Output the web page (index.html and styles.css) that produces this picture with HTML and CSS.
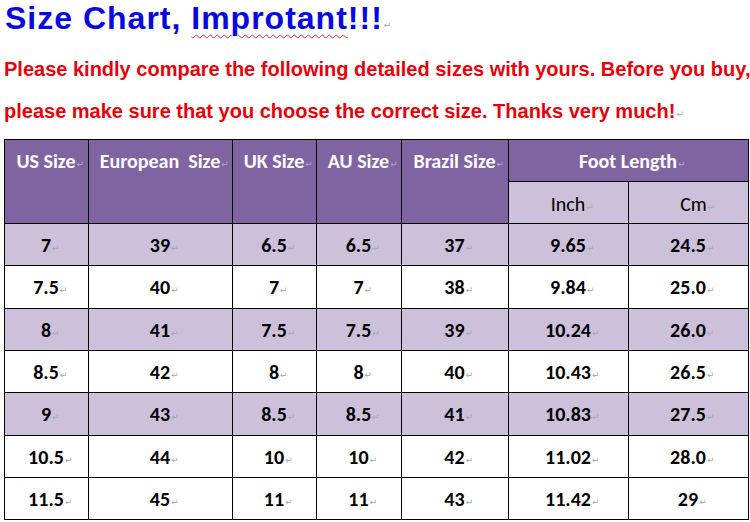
FILE: index.html
```html
<!DOCTYPE html>
<html>
<head>
<meta charset="utf-8">
<link rel="stylesheet" href="styles.css">
</head>
<body>
<h1 class="title"><span>Size Chart, </span><span class="typo">Improtant</span><span>!!!</span><span class="pm">↵</span></h1>
<div class="note">
  <div class="line first">Please kindly compare the following detailed sizes with yours. Before you buy,</div>
  <div class="line">please make sure that you choose the correct size. Thanks very much!<span class="pm">↵</span></div>
</div>
<div class="chart">
  <div class="cell head tall">US Size<span class="pm">↵</span></div>
  <div class="cell head tall">European&nbsp; Size<span class="pm">↵</span></div>
  <div class="cell head tall">UK Size<span class="pm">↵</span></div>
  <div class="cell head tall">AU Size<span class="pm">↵</span></div>
  <div class="cell head tall">Brazil Size<span class="pm">↵</span></div>
  <div class="cell head wide">Foot Length<span class="pm">↵</span></div>
  <div class="cell sub">Inch<span class="pm">↵</span></div>
  <div class="cell sub cm">Cm<span class="pm">↵</span></div>

  <div class="cell lt">7<span class="pm">↵</span></div><div class="cell lt">39<span class="pm">↵</span></div><div class="cell lt">6.5<span class="pm">↵</span></div><div class="cell lt">6.5<span class="pm">↵</span></div><div class="cell lt">37<span class="pm">↵</span></div><div class="cell lt">9.65<span class="pm">↵</span></div><div class="cell lt">24.5<span class="pm">↵</span></div>

  <div class="cell">7.5<span class="pm">↵</span></div><div class="cell">40<span class="pm">↵</span></div><div class="cell">7<span class="pm">↵</span></div><div class="cell">7<span class="pm">↵</span></div><div class="cell">38<span class="pm">↵</span></div><div class="cell">9.84<span class="pm">↵</span></div><div class="cell">25.0<span class="pm">↵</span></div>

  <div class="cell lt">8<span class="pm">↵</span></div><div class="cell lt">41<span class="pm">↵</span></div><div class="cell lt">7.5<span class="pm">↵</span></div><div class="cell lt">7.5<span class="pm">↵</span></div><div class="cell lt">39<span class="pm">↵</span></div><div class="cell lt">10.24<span class="pm">↵</span></div><div class="cell lt">26.0<span class="pm">↵</span></div>

  <div class="cell">8.5<span class="pm">↵</span></div><div class="cell">42<span class="pm">↵</span></div><div class="cell">8<span class="pm">↵</span></div><div class="cell">8<span class="pm">↵</span></div><div class="cell">40<span class="pm">↵</span></div><div class="cell">10.43<span class="pm">↵</span></div><div class="cell">26.5<span class="pm">↵</span></div>

  <div class="cell lt">9<span class="pm">↵</span></div><div class="cell lt">43<span class="pm">↵</span></div><div class="cell lt">8.5<span class="pm">↵</span></div><div class="cell lt">8.5<span class="pm">↵</span></div><div class="cell lt">41<span class="pm">↵</span></div><div class="cell lt">10.83<span class="pm">↵</span></div><div class="cell lt">27.5<span class="pm">↵</span></div>

  <div class="cell">10.5<span class="pm">↵</span></div><div class="cell">44<span class="pm">↵</span></div><div class="cell">10<span class="pm">↵</span></div><div class="cell">10<span class="pm">↵</span></div><div class="cell">42<span class="pm">↵</span></div><div class="cell">11.02<span class="pm">↵</span></div><div class="cell">28.0<span class="pm">↵</span></div>

  <div class="cell">11.5<span class="pm">↵</span></div><div class="cell">45<span class="pm">↵</span></div><div class="cell">11<span class="pm">↵</span></div><div class="cell">11<span class="pm">↵</span></div><div class="cell">43<span class="pm">↵</span></div><div class="cell">11.42<span class="pm">↵</span></div><div class="cell">29<span class="pm">↵</span></div>
</div>
</body>
</html>
```

FILE: styles.css
```css
html, body {
  margin: 0;
  padding: 0;
  background: #ffffff;
}

.title {
  margin: 0;
  padding: 0 0 0 5px;
  height: 36px;
  font-family: "Liberation Sans", Arial, sans-serif;
  font-weight: bold;
  font-size: 32px;
  line-height: 36px;
  letter-spacing: 1px;
  color: #0808e0;
  white-space: nowrap;
}

.typo {
  text-decoration: underline wavy #d23030;
  text-decoration-thickness: 1px;
  text-underline-offset: 5px;
}

.pm {
  display: inline-block;
  width: 0;
  overflow: visible;
  font-family: "DejaVu Sans", sans-serif;
  font-weight: normal;
  font-size: 9px;
  line-height: 1;
  letter-spacing: 0;
  color: #a8a8a8;
  padding-left: 1px;
  vertical-align: 1px;
}

.note {
  margin: 13px 0 0 4px;
  width: 744px;
  font-family: "Liberation Sans", Arial, sans-serif;
  font-weight: bold;
  font-size: 20px;
  line-height: 41.5px;
  color: #e5000a;
  white-space: nowrap;
}

.line.first {
  text-align: justify;
  text-align-last: justify;
}

.chart {
  margin: 7px 0 0 4px;
  display: grid;
  grid-template-columns: 83px 143px 83px 84px 106px 119px 119px;
  grid-template-rows: 41px 41px 41px 42px 41px 41px 42px 41px 41px;
  gap: 1px;
  padding: 1px;
  background: #000000;
  width: max-content;
  font-family: "Carlito", "Lato", sans-serif;
  font-weight: bold;
  font-size: 20px;
  color: #000000;
}

.cell {
  background: #ffffff;
  text-align: center;
  padding-top: 1px;
  line-height: 40px;
  box-sizing: border-box;
  white-space: nowrap;
}

.cell.lt {
  background: #ccc0da;
}

.head {
  background: #8064a2;
  color: #ffffff;
  padding-top: 9px;
  line-height: 24px;
}

.head .pm {
  color: #b5a3cc;
}

.tall {
  grid-row: span 2;
}

.wide {
  grid-column: span 2;
}

.sub {
  background: #ccc0da;
  font-weight: normal;
  padding-top: 4px;
  line-height: 37px;
}

.cm {
  padding-left: 11px;
}
```
